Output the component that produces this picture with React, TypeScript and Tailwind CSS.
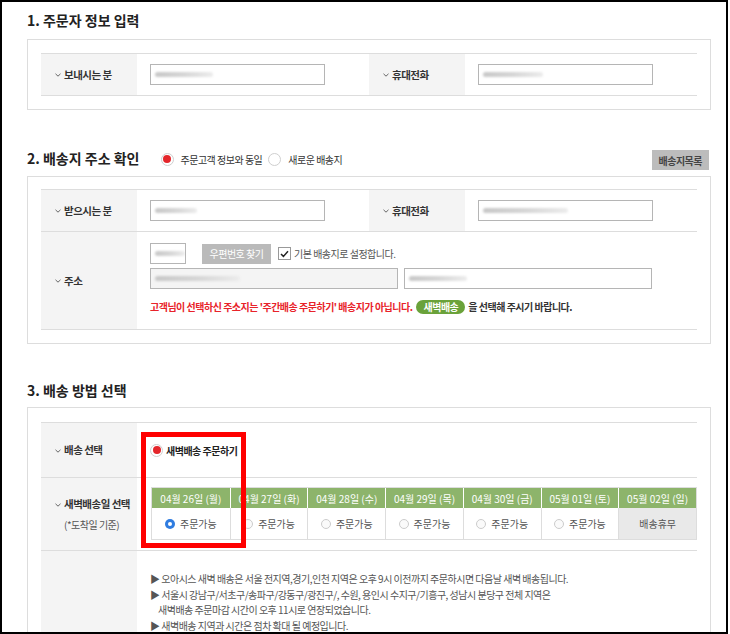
import React from 'react';

const Chev = () => (
  <svg width="6" height="4" viewBox="0 0 6 4" className="mr-[3px] mt-[1px]">
    <path d="M0.5 0.8 L3 3.2 L5.5 0.8" fill="none" stroke="#555" strokeWidth="0.9" />
  </svg>
);

function Label({ children, className = '' }: { children: React.ReactNode; className?: string }) {
  return (
    <div className={`w-[96px] shrink-0 bg-[#f4f4f4] flex pl-[14px] text-[10.5px] font-bold text-[#333] ${className}`}>
      {children}
    </div>
  );
}

function BlurInput({ className = '', bar = 'w-[60px]', bg = 'bg-white' }: { className?: string; bar?: string; bg?: string }) {
  return (
    <div className={`h-[21px] border border-[#b5b5b5] flex items-center pl-[4px] overflow-hidden ${bg} ${className}`}>
      <div className={`h-[5px] rounded-sm bg-gradient-to-r from-[#c8c8c8] via-[#d6d6d6] to-[#ececec] blur-[1px] ${bar}`} />
    </div>
  );
}

function Radio({ on = false }: { on?: boolean }) {
  return (
    <span className="w-[13px] h-[13px] rounded-full border border-[#cfcfcf] bg-white flex items-center justify-center shrink-0">
      {on && <span className="w-[8px] h-[8px] rounded-full bg-[#e4262b]" />}
    </span>
  );
}

function SmallRadio({ on = false }: { on?: boolean }) {
  return (
    <span
      className={`w-[10px] h-[10px] rounded-full flex items-center justify-center shrink-0 ${
        on ? 'bg-[#2f7ce0]' : 'border border-[#cccccc] bg-[#fafafa]'
      }`}
    >
      {on && <span className="w-[4px] h-[4px] rounded-full bg-white" />}
    </span>
  );
}

const dates = [
  '04월 26일 (월)',
  '04월 27일 (화)',
  '04월 28일 (수)',
  '04월 29일 (목)',
  '04월 30일 (금)',
  '05월 01일 (토)',
  '05월 02일 (일)',
];

export default function App() {
  return (
    <div className="relative w-[730px] h-[634px] overflow-hidden bg-white tracking-[-0.5px] font-['Noto_Sans_CJK_KR','Noto_Sans',sans-serif]">
      <div className="w-[728px] h-[634px] border-2 border-black pl-[25px] overflow-hidden">
        {/* 1. 주문자 정보 */}
        <h2 className="mt-[8px] mb-[9px] h-[20px] leading-[20px] text-[14px] font-bold text-[#222] tracking-normal">
          1. 주문자 정보 입력
        </h2>
        <div className="w-[684px] border border-[#dddddd] p-[13px]">
          <div className="border-t border-[#dddddd]">
            <div className="flex h-[42px] border-b border-[#dddddd]">
              <Label className="items-center">
                <Chev />
                보내시는 분
              </Label>
              <div className="w-[232px] pl-[13px] flex items-center">
                <BlurInput className="w-[175px]" bar="w-[58px]" />
              </div>
              <Label className="items-center">
                <Chev />
                휴대전화
              </Label>
              <div className="flex-1 pl-[13px] flex items-center">
                <BlurInput className="w-[175px]" bar="w-[60px]" />
              </div>
            </div>
          </div>
        </div>

        {/* 2. 배송지 주소 */}
        <div className="mt-[40px] mb-[6px] h-[20px] w-[684px] flex items-center">
          <h2 className="text-[14px] font-bold text-[#222] leading-[20px] tracking-normal -mt-[5px]">2. 배송지 주소 확인</h2>
          <div className="ml-[21px] flex items-center text-[10px] text-[#333] -mt-[2px]">
            <Radio on />
            <span className="ml-[7px] mr-[6px]">주문고객 정보와 동일</span>
            <Radio />
            <span className="ml-[7px]">새로운 배송지</span>
          </div>
          <button className="ml-auto mr-[2px] h-[20px] px-[7px] bg-[#bcbcbc] text-[10px] font-bold text-[#444]">
            배송지목록
          </button>
        </div>
        <div className="w-[684px] border border-[#dddddd] pt-[12px] px-[13px] pb-[13px]">
          <div className="border-t border-[#dddddd]">
            <div className="flex h-[42px] border-b border-[#dddddd]">
              <Label className="items-center">
                <Chev />
                받으시는 분
              </Label>
              <div className="w-[232px] pl-[13px] flex items-center">
                <BlurInput className="w-[175px]" bar="w-[42px]" />
              </div>
              <Label className="items-center">
                <Chev />
                휴대전화
              </Label>
              <div className="flex-1 pl-[13px] flex items-center">
                <BlurInput className="w-[175px]" bar="w-[85px]" />
              </div>
            </div>
            <div className="flex h-[98px] border-b border-[#dddddd]">
              <Label className="items-center">
                <Chev />
                주소
              </Label>
              <div className="flex-1 pl-[13px] pt-[11px]">
                <div className="flex items-center h-[21px]">
                  <BlurInput className="w-[36px]" bar="w-[32px]" />
                  <button className="ml-[16px] h-[20px] w-[69px] bg-[#bababa] text-white text-[10px]">우편번호 찾기</button>
                  <span className="ml-[7px] w-[13px] h-[13px] border border-[#999] bg-white flex items-center justify-center">
                    <svg width="9" height="8" viewBox="0 0 9 8">
                      <path d="M1 4 L3.4 6.4 L8 1.2" fill="none" stroke="#222" strokeWidth="1.5" />
                    </svg>
                  </span>
                  <span className="ml-[3px] text-[10px] text-[#555]">기본 배송지로 설정합니다.</span>
                </div>
                <div className="flex items-center gap-[6px] mt-[4px]">
                  <BlurInput className="w-[248px]" bar="w-[85px]" bg="bg-[#f4f4f4]" />
                  <BlurInput className="w-[248px]" bar="w-[58px]" />
                </div>
                <div className="mt-[11px] flex items-center text-[10px] font-bold leading-[14px]">
                  <span className="text-[#e8232a]">고객님이 선택하신 주소지는 '주간배송 주문하기' 배송지가 아닙니다.</span>
                  <span className="ml-[4px] px-[7px] h-[14px] leading-[14px] rounded-full bg-[#6aa23a] text-white">새벽배송</span>
                  <span className="ml-[3px] text-[#333]">을 선택해 주시기 바랍니다.</span>
                </div>
              </div>
            </div>
          </div>
        </div>

        {/* 3. 배송 방법 */}
        <h2 className="mt-[36px] mb-[7px] h-[20px] leading-[20px] text-[14px] font-bold text-[#222] tracking-normal">
          3. 배송 방법 선택
        </h2>
        <div className="w-[684px] h-[300px] border border-[#dddddd] pt-[14px] px-[13px]">
          <div className="border-t border-[#dddddd]">
            <div className="flex h-[55px] border-b border-[#dddddd]">
              <Label className="items-center">
                <Chev />
                배송 선택
              </Label>
              <div className="flex-1 pl-[13px] flex items-center gap-[3px] text-[10px] font-bold text-[#222]">
                <Radio on />
                새벽배송 주문하기
              </div>
            </div>
            <div className="flex h-[73px] border-b border-[#dddddd]">
              <Label className="flex-col justify-center">
                <div className="flex items-center">
                  <Chev />
                  새벽배송일 선택
                </div>
                <div className="mt-[5px] pl-[9px] text-[10px] font-normal text-[#555]">(*도착일 기준)</div>
              </Label>
              <div className="flex-1 pl-[14px] pt-[9px]">
                <div className="grid grid-cols-7 border border-[#dddddd] tracking-normal">
                  {dates.map((d, i) => (
                    <div
                      key={d}
                      className={`h-[20px] bg-[#8db46b] text-white text-[10px] flex items-center justify-center ${
                        i > 0 ? 'border-l border-white' : ''
                      }`}
                    >
                      {d}
                    </div>
                  ))}
                  {dates.map((d, i) =>
                    i === 6 ? (
                      <div key={d + 'b'} className="h-[31px] bg-[#e9e9e9] border-l border-[#dddddd] text-[10px] text-[#555] flex items-center justify-center">
                        배송휴무
                      </div>
                    ) : (
                      <div
                        key={d + 'b'}
                        className={`h-[31px] bg-white text-[10px] text-[#555] flex items-center justify-center gap-[5px] ${
                          i > 0 ? 'border-l border-[#dddddd]' : ''
                        }`}
                      >
                        <SmallRadio on={i === 0} />
                        주문가능
                      </div>
                    )
                  )}
                </div>
              </div>
            </div>
            <div className="flex h-[120px]">
              <Label>{null}</Label>
              <div className="flex-1 pl-[13px] pt-[20px] text-[10px] text-[#555] leading-[15.5px]">
                <div>▶ 오아시스 새벽 배송은 서울 전지역,경기,인천 지역은 오후 9시 이전까지 주문하시면 다음날 새벽 배송됩니다.</div>
                <div>▶ 서울시 강남구/서초구/송파구/강동구/광진구/, 수원, 용인시 수지구/기흥구, 성남시 분당구 전체 지역은</div>
                <div className="pl-[8px]">새벽배송 주문마감 시간이 오후 11시로 연장되었습니다.</div>
                <div>▶ 새벽배송 지역과 시간은 점차 확대 될 예정입니다.</div>
              </div>
            </div>
          </div>
        </div>
      </div>

      {/* highlight box */}
      <div className="absolute left-[141px] top-[432px] w-[105px] h-[116px] border-[5px] border-[#ff0000]" />
    </div>
  );
}
